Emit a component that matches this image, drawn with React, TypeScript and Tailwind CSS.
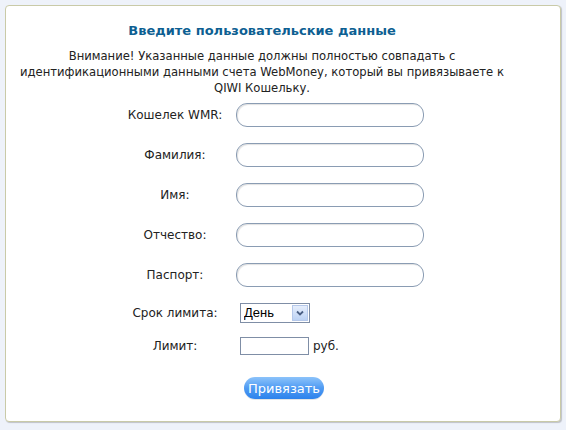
import { useState } from 'react'

const font = { fontFamily: '"DejaVu Sans", Verdana, sans-serif' }

function Field({ label }: { label: string }) {
	return (
		<div className="flex items-center h-6">
			<div className="w-[110px] text-center text-[12px] text-[#222]">{label}</div>
			<input
				type="text"
				className="ml-[6px] w-[188px] h-6 rounded-[11px] border border-[#8a9cb3] bg-white shadow-[inset_1px_1px_1px_rgba(0,0,0,0.12)] outline-none px-2 text-[12px]"
			/>
		</div>
	)
}

export default function App() {
	const [period, setPeriod] = useState('День')

	return (
		<div className="w-[566px] h-[430px] bg-[#eef2fa] p-[5px]" style={font}>
			<div className="w-[556px] h-[417px] bg-white border border-[#c9caa8] rounded-[4px] shadow-[1px_1px_1px_rgba(0,0,0,0.2)] flex flex-col">
				<div className="pr-[42px]">
					<h1 className="mt-[16px] text-center text-[13px] font-bold text-[#0d5f92] leading-[18px]">
						Введите пользовательские данные
					</h1>
					<p className="mt-[8px] text-center text-[11.6px] leading-[16px] text-[#222]">
						Внимание! Указанные данные должны полностью совпадать с
						<br />
						идентификационными данными счета WebMoney, который вы привязываете к
						<br />
						QIWI Кошельку.
					</p>
				</div>

				<div className="mt-[7px] pl-[114px] flex flex-col gap-4">
					<Field label="Кошелек WMR:" />
					<Field label="Фамилия:" />
					<Field label="Имя:" />
					<Field label="Отчество:" />
					<Field label="Паспорт:" />
				</div>

				<div className="mt-[16px] pl-[114px] flex items-center h-5">
					<div className="w-[110px] text-center text-[12px] text-[#222]">Срок лимита:</div>
					<div className="relative ml-[10px] w-[70px] h-5 border border-[#7f8ea6] bg-white">
						<select
							value={period}
							onChange={(e) => setPeriod(e.target.value)}
							className="appearance-none block w-full h-[18px] py-0 pl-[3px] leading-[18px] text-[13px] text-black bg-transparent outline-none"
							style={{ fontFamily: '"Liberation Sans", Arial, sans-serif' }}
						>
							<option>День</option>
							<option>Неделя</option>
							<option>Месяц</option>
						</select>
						<div className="pointer-events-none absolute right-[1px] top-[1px] w-4 h-4 border border-[#b5c8ea] bg-gradient-to-b from-[#e6eefc] to-[#bcd2f4] flex items-center justify-center">
							<svg width="8" height="6" viewBox="0 0 8 6">
								<path d="M1 1.5 L4 4.5 L7 1.5" stroke="#4a5f84" strokeWidth="1.8" fill="none" />
							</svg>
						</div>
					</div>
				</div>

				<div className="mt-[14px] pl-[114px] flex items-center h-[18px]">
					<div className="w-[110px] text-center text-[12px] text-[#222]">Лимит:</div>
					<input
						type="text"
						className="ml-[10px] w-[69px] h-[18px] border border-[#7f8ea6] bg-white outline-none px-1 text-[12px]"
					/>
					<span className="ml-[4px] text-[12px] text-[#222]">руб.</span>
				</div>

				<div className="mt-[22px] flex pl-[238px]">
					<button className="w-[80px] h-[22px] rounded-full bg-gradient-to-b from-[#8cc3fa] via-[#4f9bf3] to-[#2c82ec] text-white text-[13px] leading-none shadow-[0_1px_0_rgba(0,0,0,0.1)]">
						Привязать
					</button>
				</div>
			</div>
		</div>
	)
}
